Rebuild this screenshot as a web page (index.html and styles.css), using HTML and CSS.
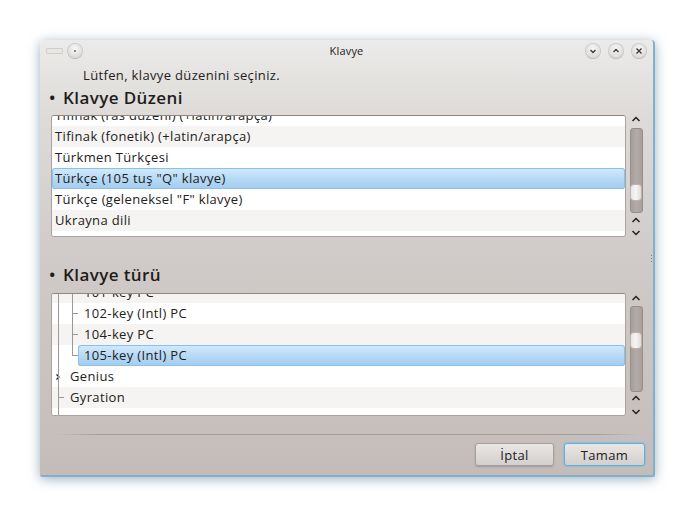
FILE: index.html
```html
<!DOCTYPE html>
<html lang="tr">
<head>
<meta charset="utf-8">
<title>Klavye</title>
<link rel="stylesheet" href="styles.css">
</head>
<body>
<div class="window">
  <div class="titlebar">
    <div class="tb-left">
      <span class="tb-menu"></span>
      <span class="tb-btn"><svg width="14" height="14" viewBox="0 0 14 14"><circle cx="7" cy="7" r="1" fill="#6d6a68"/></svg></span>
    </div>
    <div class="tb-title">Klavye</div>
    <div class="tb-right">
      <span class="tb-btn"><svg width="14" height="14" viewBox="0 0 14 14"><polyline points="4.5,6 7,8.5 9.5,6" fill="none" stroke="#3c3a39" stroke-width="1.4"/></svg></span>
      <span class="tb-btn"><svg width="14" height="14" viewBox="0 0 14 14"><polyline points="4.5,8 7,5.5 9.5,8" fill="none" stroke="#3c3a39" stroke-width="1.4"/></svg></span>
      <span class="tb-btn"><svg width="14" height="14" viewBox="0 0 14 14"><path d="M4.5 4.5 L9.5 9.5 M9.5 4.5 L4.5 9.5" fill="none" stroke="#3c3a39" stroke-width="1.4"/></svg></span>
    </div>
  </div>
  <div class="content">
    <div class="intro">Lütfen, klavye düzenini seçiniz.</div>
    <div class="heading heading1"><span class="bullet">•</span>Klavye Düzeni</div>
    <div class="listrow listrow1">
      <div class="list list1">
        <div class="rows rows1">
          <div class="row">Tifinak (ras düzeni) (+latin/arapça)</div>
          <div class="row alt">Tifinak (fonetik) (+latin/arapça)</div>
          <div class="row">Türkmen Türkçesi</div>
          <div class="row sel">Türkçe (105 tuş "Q" klavye)</div>
          <div class="row">Türkçe (geleneksel "F" klavye)</div>
          <div class="row alt">Ukrayna dili</div>
          <div class="row">Urduca klavye</div>
        </div>
      </div>
      <div class="scroll scroll1">
        <svg class="arr a-up" width="14" height="8" viewBox="0 0 14 8"><polyline points="3.5,6 7,2.5 10.5,6" fill="none" stroke="#222" stroke-width="1.5"/></svg>
        <div class="groove groove1"><div class="handle"></div></div>
        <svg class="arr a-up2" width="14" height="8" viewBox="0 0 14 8"><polyline points="3.5,6 7,2.5 10.5,6" fill="none" stroke="#222" stroke-width="1.5"/></svg>
        <svg class="arr a-down" width="14" height="8" viewBox="0 0 14 8"><polyline points="3.5,2 7,5.5 10.5,2" fill="none" stroke="#222" stroke-width="1.5"/></svg>
      </div>
    </div>
    <div class="heading heading2"><span class="bullet">•</span>Klavye türü</div>
    <div class="listrow listrow2">
      <div class="list list2">
        <div class="rows rows2">
          <div class="row alt child">101-key PC</div>
          <div class="row child">102-key (Intl) PC</div>
          <div class="row alt child">104-key PC</div>
          <div class="row child last"><span class="selbox">105-key (Intl) PC</span></div>
          <div class="row top"><svg class="exp" width="8" height="8" viewBox="0 0 8 8"><polyline points="2.5,1.5 5,4 2.5,6.5" fill="none" stroke="#222" stroke-width="1.3"/></svg>Genius</div>
          <div class="row alt top tick">Gyration</div>
          <div class="row top"></div>
        </div>
        <div class="vline"></div>
      </div>
      <div class="scroll scroll2">
        <svg class="arr a-up" width="14" height="8" viewBox="0 0 14 8"><polyline points="3.5,6 7,2.5 10.5,6" fill="none" stroke="#222" stroke-width="1.5"/></svg>
        <div class="groove groove2"><div class="handle"></div></div>
        <svg class="arr a-up2" width="14" height="8" viewBox="0 0 14 8"><polyline points="3.5,6 7,2.5 10.5,6" fill="none" stroke="#222" stroke-width="1.5"/></svg>
        <svg class="arr a-down" width="14" height="8" viewBox="0 0 14 8"><polyline points="3.5,2 7,5.5 10.5,2" fill="none" stroke="#222" stroke-width="1.5"/></svg>
      </div>
    </div>
    <div class="separator"></div>
    <div class="buttons">
      <button class="btn">İptal</button>
      <button class="btn default">Tamam</button>
    </div>
  </div>
  <div class="grip"></div>
</div>
</body>
</html>
```
FILE: styles.css
```css
html, body {
  margin: 0;
  padding: 0;
  background: #ffffff;
}
body {
  font-family: "Open Sans", "DejaVu Sans", sans-serif;
  color: #232120;
  width: 694px;
  height: 517px;
  overflow: hidden;
}
.window {
  margin: 40px 0 0 40px;
  width: 613px;
  height: 435px;
  border-radius: 4px 4px 2px 2px;
  border-right: 2px solid #7fb0cd;
  border-bottom: 2px solid #7fb0cd;
  background: linear-gradient(180deg, #ecebe9 0%, #dddad7 18%, #d0cbc8 50%, #c4bcb9 100%);
  box-shadow: 0 2px 12px rgba(70, 110, 140, 0.55);
  display: flex;
  flex-direction: column;
  position: relative;
}
.titlebar {
  height: 21px;
  display: flex;
  align-items: center;
  padding: 0 7px 0 6px;
  position: relative;
}
.tb-left, .tb-right {
  display: flex;
  align-items: center;
}
.tb-left { gap: 5px; }
.tb-right { gap: 9px; margin-left: auto; }
.tb-title {
  position: absolute;
  left: 0;
  right: 0;
  text-align: center;
  font-size: 11px;
  letter-spacing: 0.2px;
  color: #222;
  top: 3px;
  pointer-events: none;
}
.tb-menu {
  width: 15px;
  height: 4px;
  border: 1px solid #d0cdcb;
  background: #e8e6e4;
  border-radius: 1px;
  margin-top: 1px;
}
.tb-btn {
  width: 14px;
  height: 14px;
  border-radius: 50%;
  background: radial-gradient(circle at 50% 35%, #f8f8f7 0%, #e2e0de 60%, #cfccca 100%);
  box-shadow: 0 0 0 1px rgba(150, 145, 142, 0.35), 0 1px 1px rgba(0,0,0,0.12);
  display: flex;
}
.content {
  flex: 1;
  display: flex;
  flex-direction: column;
  padding: 0 10px 0 11px;
}
.intro {
  margin-top: 5px;
  height: 19px;
  line-height: 19px;
  font-size: 13px;
  letter-spacing: 0.35px;
  padding-left: 32px;
}
.heading {
  height: 22px;
  line-height: 22px;
  font-size: 17px;
  font-weight: 600;
  letter-spacing: 0.4px;
  color: #1e1c1b;
}
.heading1 { margin-top: 2px; }
.heading .bullet {
  display: inline-block;
  width: 14px;
  margin-left: -2px;
  letter-spacing: 0;
}
.heading2 { margin-top: 27px; }
.listrow {
  display: flex;
  gap: 3px;
}
.listrow1 { margin-top: 6px; }
.listrow2 { margin-top: 7px; }
.list {
  flex: 1;
  background: #fff;
  border: 1px solid #aaa4a0;
  border-top-color: #8e8885;
  border-radius: 3px;
  overflow: hidden;
  position: relative;
}
.list1 { height: 120px; }
.list2 { height: 121px; }
.rows1 { margin-top: -11px; }
.rows2 { margin-top: -12px; }
.row {
  height: 21px;
  line-height: 21px;
  font-size: 13px;
  letter-spacing: 0.35px;
  padding-left: 3px;
  white-space: nowrap;
  background: #fff;
  position: relative;
}
.row.alt { background: #f5f4f2; }
.row.sel, .selbox {
  background: linear-gradient(180deg, #d3eafc 0%, #b7daf6 50%, #a2ccef 100%);
  box-shadow: inset 0 0 0 1px #8dc0e7;
  border-radius: 3px;
}
.rows2 .row { padding-left: 0; }
.row.child { padding-left: 32px; }
.row.child::before {
  content: "";
  position: absolute;
  left: 20px;
  top: 10px;
  width: 6px;
  height: 1px;
  background: #9d9896;
}
.row.last::after {
  content: "";
  position: absolute;
  left: 20px;
  top: 0;
  width: 1px;
  height: 11px;
  background: #9d9896;
}
.row.child:not(.last)::after {
  content: "";
  position: absolute;
  left: 20px;
  top: 0;
  width: 1px;
  height: 21px;
  background: #9d9896;
}
.row.last { padding-left: 26px; }
.selbox {
  display: block;
  height: 21px;
  padding-left: 6px;
}
.row.top { padding-left: 18px; }
.row.tick::before {
  content: "";
  position: absolute;
  left: 6px;
  top: 10px;
  width: 6px;
  height: 1px;
  background: #9d9896;
}
.exp {
  position: absolute;
  left: 2px;
  top: 7px;
}
.vline {
  position: absolute;
  left: 6px;
  top: 0;
  bottom: 0;
  width: 1px;
  background: #9d9896;
}
.scroll {
  width: 14px;
  display: flex;
  flex-direction: column;
  align-items: center;
}
.arr { display: block; flex: none; }
.groove {
  box-sizing: border-box;
  width: 13px;
  border: 1px solid #958e8b;
  border-radius: 3px;
  background: linear-gradient(90deg, #a69f9c, #b2aba8 50%, #a69f9c);
  display: flex;
  flex-direction: column;
  align-items: center;
  flex: none;
}
.scroll1 .groove { margin-top: 5px; height: 85px; }
.scroll1 .a-up2 { margin-top: 3px; }
.scroll1 .a-down { margin-top: 5px; }
.scroll2 .a-up { margin-top: 1px; }
.scroll2 .groove { margin-top: 4px; height: 86px; }
.scroll2 .a-up2 { margin-top: 2px; }
.scroll2 .a-down { margin-top: 6px; }
.handle {
  width: 10px;
  height: 15px;
  border-radius: 3px;
  background: linear-gradient(90deg, #e9e7e5, #f6f5f4 50%, #dfdcda);
  box-shadow: 0 0 0 1px #b9b3b0;
}
.groove1 .handle { margin-top: 56px; }
.groove2 .handle { margin-top: 26px; }
.separator {
  margin-top: 18px;
  height: 1px;
  margin-left: 4px;
  margin-right: 3px;
  background: linear-gradient(90deg, rgba(160,154,150,0), #a39d99 8%, #a39d99 92%, rgba(160,154,150,0));
}
.buttons {
  display: flex;
  justify-content: flex-end;
  gap: 10px;
  margin-top: 8px;
  margin-right: -2px;
}
.btn {
  width: 79px;
  height: 23px;
  font-family: "Open Sans", "DejaVu Sans", sans-serif;
  font-size: 13px;
  letter-spacing: 0.35px;
  color: #232120;
  border: 1px solid #a7a19e;
  border-radius: 3px;
  background: linear-gradient(180deg, #e9e7e5, #d3cfcc);
  box-shadow: 0 1px 2px rgba(0,0,0,0.2);
  padding: 0;
}
.btn.default {
  width: 81px;
  border-color: #5daee3;
  box-shadow: 0 0 1px 1px rgba(120,190,235,0.6);
}
.grip {
  position: absolute;
  right: 1px;
  top: 215px;
  width: 1px;
  height: 8px;
  background: repeating-linear-gradient(180deg, #8a8481 0 1px, transparent 1px 3px);
}
```
